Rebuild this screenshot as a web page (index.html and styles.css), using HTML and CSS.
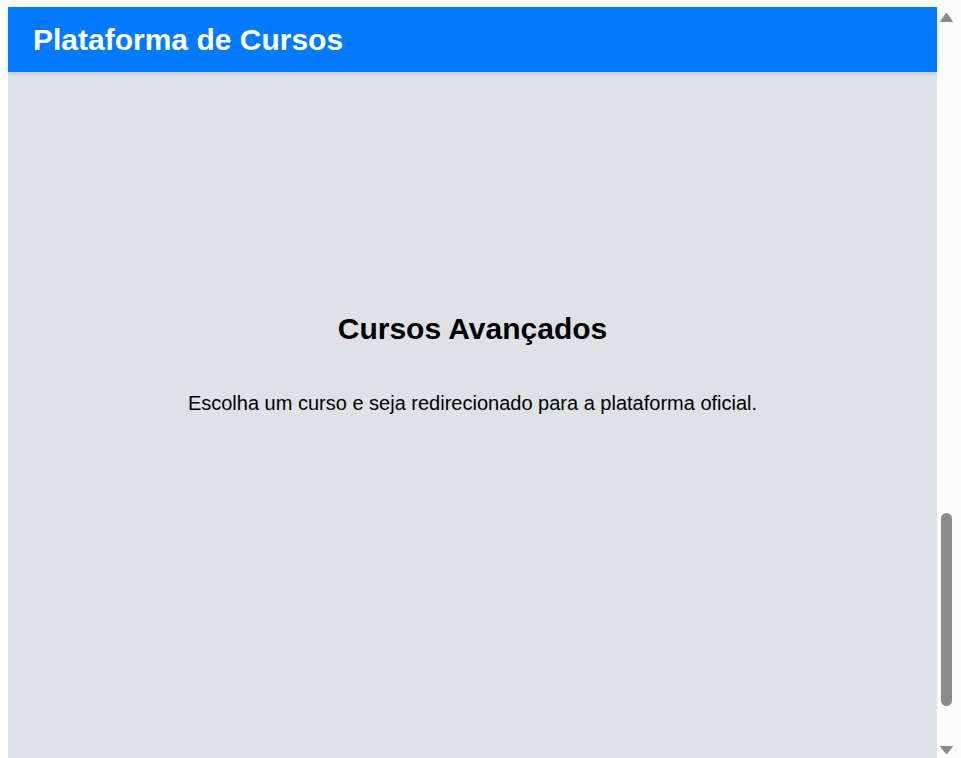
FILE: index.html
```html
<!DOCTYPE html>
<html lang="pt-BR">
<head>
<meta charset="utf-8">
<title>Plataforma de Cursos</title>
<link rel="stylesheet" href="styles.css">
</head>
<body>
<div class="app">
  <div class="page">
    <header class="header">
      <h1 class="brand">Plataforma de Cursos</h1>
    </header>
    <main class="main">
      <section class="hero">
        <h2 class="hero-title">Cursos Avançados</h2>
        <p class="hero-text">Escolha um curso e seja redirecionado para a plataforma oficial.</p>
      </section>
    </main>
  </div>
  <div class="scrollbar" aria-hidden="true">
    <div class="sb-button sb-up">
      <svg width="24" height="24" viewBox="0 0 24 24"><path d="M3.5 21.5 L9.5 13 L15.5 21.5 Z" fill="#8b8b8b" stroke="#8b8b8b" stroke-linejoin="round"/></svg>
    </div>
    <div class="sb-track">
      <div class="sb-thumb"></div>
    </div>
    <div class="sb-button sb-down">
      <svg width="24" height="24" viewBox="0 0 24 24"><path d="M3.5 12.5 L15.5 12.5 L9.5 20 Z" fill="#8b8b8b" stroke="#8b8b8b" stroke-linejoin="round"/></svg>
    </div>
  </div>
</div>
</body>
</html>
```
FILE: styles.css
```css
html, body {
  margin: 0;
  height: 100%;
  overflow: hidden;
}

body {
  font-family: "Liberation Sans", Arial, sans-serif;
  background: #ffffff;
}

.app {
  height: 100vh;
  display: grid;
  grid-template-columns: 1fr 24px;
}

.page {
  display: flex;
  flex-direction: column;
  padding: 7px 0 0 8px;
  min-width: 0;
}

.header {
  position: relative;
  z-index: 1;
  flex: 0 0 65px;
  display: flex;
  align-items: center;
  padding: 0 25px;
  background: #007bff;
  box-shadow: 0 2px 5px rgba(0, 0, 0, 0.12);
}

.brand {
  margin: 0;
  font-size: 30px;
  font-weight: bold;
  color: #ffffff;
  line-height: normal;
}

.main {
  flex: 1;
  background: #dee2e6;
}

.hero {
  padding-top: 240px;
  text-align: center;
}

.hero-title {
  margin: 0;
  font-size: 30px;
  font-weight: bold;
  color: #000000;
  line-height: normal;
}

.hero-text {
  margin: 46px 0 0;
  font-size: 20px;
  color: #000000;
  line-height: normal;
}

.scrollbar {
  display: flex;
  flex-direction: column;
  background: #fcfcfc;
}

.sb-button {
  height: 24px;
  display: flex;
}

.sb-down {
  height: 52px;
  align-items: flex-end;
}

.sb-track {
  flex: 1;
  display: flex;
  flex-direction: column;
  justify-content: flex-end;
}

.sb-thumb {
  height: 193px;
  width: 11px;
  margin-left: 4px;
  border-radius: 5.5px;
  background: #8b8b8b;
}
```
